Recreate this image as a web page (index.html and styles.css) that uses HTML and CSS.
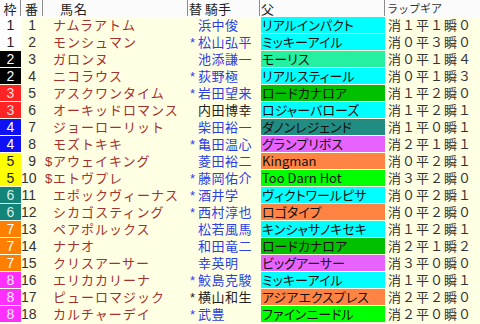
FILE: index.html
```html
<!DOCTYPE html>
<html lang="ja">
<head>
<meta charset="utf-8">
<link rel="stylesheet" href="styles.css">
</head>
<body>
<div class="table">
  <div class="row head">
    <div class="h h-waku">枠</div>
    <div class="h h-ban">番</div>
    <div class="h h-name">馬名</div>
    <div class="h h-jockey">替 騎手</div>
    <div class="h h-sire">父</div>
    <div class="h h-gear">ラップギア</div>
  </div>

  <div class="row"><div class="waku w1">1</div><div class="ban">1</div><div class="name"><span class="pre"></span>ナムラアトム</div><div class="jockey"><span class="pre"></span>浜中俊</div><div class="sire s-cyan">リアルインパクト</div><div class="gear">消１平１瞬０</div></div>
  <div class="row"><div class="waku w1">1</div><div class="ban">2</div><div class="name"><span class="pre"></span>モンシュマン</div><div class="jockey"><span class="pre">*</span>松山弘平</div><div class="sire s-cyan">ミッキーアイル</div><div class="gear">消０平３瞬０</div></div>
  <div class="row"><div class="waku w2">2</div><div class="ban">3</div><div class="name"><span class="pre"></span>ガロンヌ</div><div class="jockey"><span class="pre"></span>池添謙一</div><div class="sire s-sea">モーリス</div><div class="gear">消０平１瞬４</div></div>
  <div class="row"><div class="waku w2">2</div><div class="ban">4</div><div class="name"><span class="pre"></span>ニコラウス</div><div class="jockey"><span class="pre">*</span>荻野極</div><div class="sire s-cyan">リアルスティール</div><div class="gear">消０平１瞬３</div></div>
  <div class="row"><div class="waku w3">3</div><div class="ban">5</div><div class="name"><span class="pre"></span>アスクワンタイム</div><div class="jockey"><span class="pre">*</span>岩田望来</div><div class="sire s-green">ロードカナロア</div><div class="gear">消１平２瞬０</div></div>
  <div class="row"><div class="waku w3">3</div><div class="ban">6</div><div class="name"><span class="pre"></span>オーキッドロマンス</div><div class="jockey dark"><span class="pre"></span>内田博幸</div><div class="sire s-cyan">ロジャーバローズ</div><div class="gear">消１平２瞬１</div></div>
  <div class="row"><div class="waku w4">4</div><div class="ban">7</div><div class="name"><span class="pre"></span>ジョーローリット</div><div class="jockey"><span class="pre"></span>柴田裕一</div><div class="sire s-teal">ダノンレジェンド</div><div class="gear">消１平０瞬１</div></div>
  <div class="row"><div class="waku w4">4</div><div class="ban">8</div><div class="name"><span class="pre"></span>モズトキキ</div><div class="jockey"><span class="pre">*</span>亀田温心</div><div class="sire s-violet">グランプリボス</div><div class="gear">消２平１瞬１</div></div>
  <div class="row"><div class="waku w5">5</div><div class="ban">9</div><div class="name"><span class="pre">$</span>アウェイキング</div><div class="jockey"><span class="pre"></span>菱田裕二</div><div class="sire s-orange">Kingman</div><div class="gear">消０平２瞬１</div></div>
  <div class="row"><div class="waku w5">5</div><div class="ban">10</div><div class="name"><span class="pre">$</span>エトヴプレ</div><div class="jockey"><span class="pre">*</span>藤岡佑介</div><div class="sire s-lime">Too Darn Hot</div><div class="gear">消３平２瞬０</div></div>
  <div class="row"><div class="waku w6">6</div><div class="ban">11</div><div class="name"><span class="pre"></span>エポックヴィーナス</div><div class="jockey"><span class="pre">*</span>酒井学</div><div class="sire s-cyan">ヴィクトワールピサ</div><div class="gear">消０平２瞬１</div></div>
  <div class="row"><div class="waku w6">6</div><div class="ban">12</div><div class="name"><span class="pre"></span>シカゴスティング</div><div class="jockey"><span class="pre">*</span>西村淳也</div><div class="sire s-orange">ロゴタイプ</div><div class="gear">消０平２瞬０</div></div>
  <div class="row"><div class="waku w7">7</div><div class="ban">13</div><div class="name"><span class="pre"></span>ペアポルックス</div><div class="jockey"><span class="pre"></span>松若風馬</div><div class="sire s-cyan">キンシャサノキセキ</div><div class="gear">消１平２瞬１</div></div>
  <div class="row"><div class="waku w7">7</div><div class="ban">14</div><div class="name"><span class="pre"></span>ナナオ</div><div class="jockey"><span class="pre"></span>和田竜二</div><div class="sire s-green">ロードカナロア</div><div class="gear">消２平１瞬２</div></div>
  <div class="row"><div class="waku w7">7</div><div class="ban">15</div><div class="name"><span class="pre"></span>クリスアーサー</div><div class="jockey"><span class="pre"></span>幸英明</div><div class="sire s-violet">ビッグアーサー</div><div class="gear">消３平０瞬０</div></div>
  <div class="row"><div class="waku w8">8</div><div class="ban">16</div><div class="name"><span class="pre"></span>エリカカリーナ</div><div class="jockey"><span class="pre">*</span>鮫島克駿</div><div class="sire s-cyan">ミッキーアイル</div><div class="gear">消１平０瞬１</div></div>
  <div class="row"><div class="waku w8">8</div><div class="ban">17</div><div class="name"><span class="pre"></span>ピューロマジック</div><div class="jockey dark"><span class="pre">*</span>横山和生</div><div class="sire s-orange">アジアエクスプレス</div><div class="gear">消２平２瞬０</div></div>
  <div class="row"><div class="waku w8">8</div><div class="ban">18</div><div class="name"><span class="pre"></span>カルチャーデイ</div><div class="jockey"><span class="pre">*</span>武豊</div><div class="sire s-lime">ファインニードル</div><div class="gear">消２平０瞬０</div></div>
</div>
</body>
</html>
```

FILE: styles.css
```css
html, body {
  margin: 0;
  padding: 0;
  background: #ffffe4;
}

body {
  width: 480px;
  height: 324px;
  overflow: hidden;
  font-family: "Noto Sans CJK JP", "Noto Sans", sans-serif;
  font-size: 13px;
  color: #222;
}

.table {
  display: flex;
  flex-direction: column;
}

.row {
  display: grid;
  grid-template-columns: 21px 22px 145px 72px 125px 95px;
  height: 17px;
}

.row > div {
  height: 16px;
  line-height: 16px;
  white-space: nowrap;
}

.head {
  background: #fbfbfb;
  height: 17px;
}

.head > .h {
  height: 16px;
  line-height: 17px;
  border-right: 1px solid #8c8c8c;
  color: #222;
  font-size: 13px;
}

.h-waku, .h-ban { text-align: center; }
.h-name { padding-left: 17px; letter-spacing: 1px; }
.h-jockey { padding-left: 1px; }
.h-sire { padding-left: 1px; }
.h-gear {
  border-right: none !important;
  padding-left: 2px;
  font-size: 11px !important;
  color: #333 !important;
}

.waku {
  text-align: center;
  font-family: "Liberation Sans", sans-serif;
  font-size: 14px;
  color: #fff;
}
.w1 { background: #ffffff; color: #222; }
.w2 { background: #000000; color: #fff; }
.w3 { background: #ff2424; color: #ffdcdc; }
.w4 { background: #1010f4; color: #fff; }
.w5 { background: #ffff00; color: #222; }
.w6 { background: #128478; color: #d8f0ec; }
.w7 { background: #ff8000; color: #fff; }
.w8 { background: #ff30ff; color: #ffe8ff; }

.ban {
  text-align: right;
  padding-right: 7px;
  font-family: "Liberation Sans", sans-serif;
  font-size: 14px;
  color: #333;
}

.name {
  padding-left: 2px;
  color: #a3302c;
  letter-spacing: 1px;
}

.pre {
  display: inline-block;
  width: 8px;
  letter-spacing: 0;
  font-family: "Liberation Sans", sans-serif;
}

.jockey {
  padding-left: 2px;
  color: #2c3fe2;
  letter-spacing: 0.5px;
}
.jockey.dark { color: #222; }

.sire {
  margin-left: 1px;
  padding-left: 1px;
  font-size: 13px;
  font-feature-settings: "palt";
  color: #111;
}
.s-cyan { background: #00ffff; }
.s-sea { background: #24f0a0; }
.s-green { background: #00c000; }
.s-lime { background: #00ff00; }
.s-teal { background: #218c82; }
.s-violet { background: #e862ff; }
.s-orange { background: #ff8444; }

.gear {
  padding-left: 3px;
  color: #333;
  letter-spacing: 1px;
}
```
